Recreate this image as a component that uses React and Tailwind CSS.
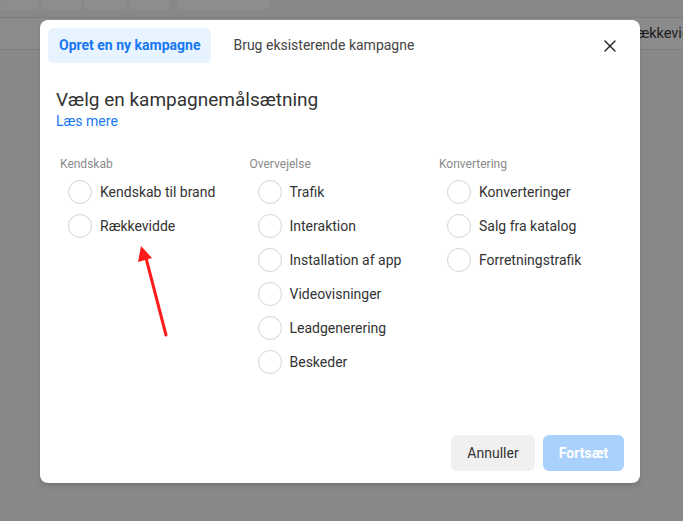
import { X } from 'lucide-react';

const columns = [
  { title: 'Kendskab', items: ['Kendskab til brand', 'Rækkevidde'] },
  {
    title: 'Overvejelse',
    items: ['Trafik', 'Interaktion', 'Installation af app', 'Videovisninger', 'Leadgenerering', 'Beskeder'],
  },
  { title: 'Konvertering', items: ['Konverteringer', 'Salg fra katalog', 'Forretningstrafik'] },
];

function Radio({ label }) {
  return (
    <div className="flex items-center h-[34px] pl-2">
      <span className="w-6 h-6 rounded-full border border-[#d4d4d4] bg-white shrink-0" />
      <span className="ml-2 text-[14px] text-[#333]">{label}</span>
    </div>
  );
}

export default function App() {
  return (
    <div
      className="relative w-[683px] h-[521px] overflow-hidden bg-[#888888]"
      style={{ fontFamily: 'Roboto, "Noto Sans", sans-serif' }}
    >
      {/* page behind overlay */}
      <div className="flex gap-[3px] h-[10px]">
        <div className="w-[38px] bg-[#8d8d8d] rounded-b-sm" />
        <div className="w-[40px] bg-[#8d8d8d] rounded-b-sm" />
        <div className="w-[42px] bg-[#8d8d8d] rounded-b-sm" />
        <div className="w-[40px] bg-[#8d8d8d] rounded-b-sm" />
        <div className="w-[92px] ml-[5px] bg-[#8d8d8d] rounded-b-sm" />
      </div>
      <div className="h-[8px] border-b border-[#7c7c7c]" />
      <div className="flex h-[32px] items-center border-b border-[#7e7e7e] bg-[#8b8b8b] pl-[628px]">
        <span className="text-[14.5px] text-[#1c1c1c] whitespace-nowrap">Rækkevidde</span>
      </div>

      {/* modal */}
      <div className="absolute left-[40px] top-[20px] w-[600px] h-[463px] bg-white rounded-lg shadow-md flex flex-col">
        <div className="flex items-center pt-2 pl-2 pr-[20px]">
          <button
            type="button"
            className="h-[35px] px-[11px] rounded-md bg-[#e7f3ff] text-[#1877f2] font-bold text-[14px]"
          >
            Opret en ny kampagne
          </button>
          <span className="ml-[22px] text-[14px] text-[#444]">Brug eksisterende kampagne</span>
          <X className="ml-auto w-[20px] h-[20px] text-[#222]" strokeWidth={1.6} />
        </div>

        <div className="pl-4 mt-[25px]">
          <h2 className="text-[19px] leading-6 text-[#333]">Vælg en kampagnemålsætning</h2>
          <a className="block text-[14px] leading-[18px] text-[#1877f2]">Læs mere</a>
        </div>

        <div className="flex pl-[20px] mt-[27px]">
          {columns.map((col) => (
            <div key={col.title} className="w-[189.5px] flex flex-col">
              <div className="text-[12px] leading-[14px] text-[#8a8a8a] mb-[4px]">{col.title}</div>
              {col.items.map((it) => (
                <Radio key={it} label={it} />
              ))}
            </div>
          ))}
        </div>

        <div className="mt-auto flex justify-end gap-2 pr-4 pb-3">
          <button
            type="button"
            className="w-[84px] h-[36px] rounded-md bg-[#f0f0f0] text-[14px] text-[#333]"
          >
            Annuller
          </button>
          <button
            type="button"
            className="w-[81px] h-[36px] rounded-md bg-[#a8d1fc] text-[14px] font-bold text-white"
          >
            Fortsæt
          </button>
        </div>
      </div>

      {/* red annotation arrow */}
      <svg className="absolute left-0 top-0" width="683" height="521" viewBox="0 0 683 521">
        <line x1="166" y1="335" x2="146" y2="258" stroke="#ff1a1a" strokeWidth="3" strokeLinecap="round" />
        <polygon points="141,246 138,262 152,258" fill="#ff1a1a" />
      </svg>
    </div>
  );
}
